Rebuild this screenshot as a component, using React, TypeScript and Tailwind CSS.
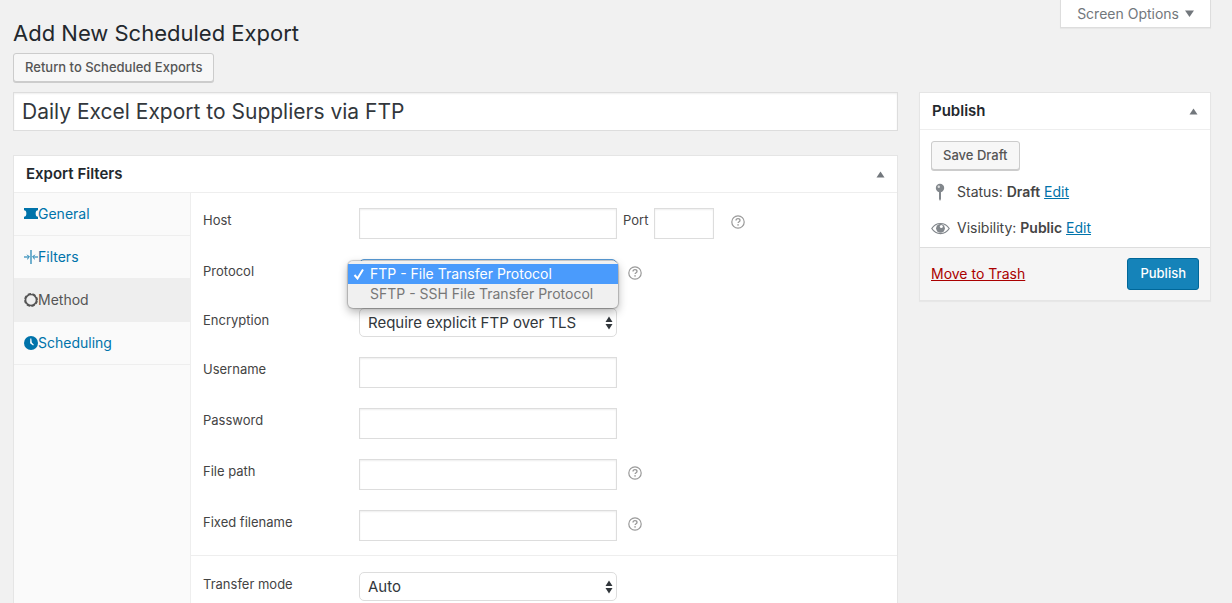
import type { ReactNode } from "react";

type IconProps = { className?: string };

const TicketIcon = ({ className }: IconProps) => (
  <svg className={className} viewBox="0 0 14 14" fill="currentColor" aria-hidden="true">
    <path d="M0 1h14v2.300a2.200 3 0 0 0 0 6.400V12H0V9.700a2.200 3 0 0 0 0-6.400z" />
  </svg>
);

const FiltersIcon = ({ className }: IconProps) => (
  <svg className={className} viewBox="0 0 14 14" fill="none" stroke="currentColor" aria-hidden="true">
    <path d="M7 0v14" strokeWidth="1.1" />
    <path d="M0 7h4.500M14 7H9.500" strokeWidth="1.1" />
    <path d="M3.200 4.800 5.400 7 3.200 9.200M10.800 4.800 8.600 7l2.200 2.200" strokeWidth="1" />
  </svg>
);

const MethodIcon = ({ className }: IconProps) => (
  <svg className={className} viewBox="0 0 14 14" fill="none" stroke="currentColor" aria-hidden="true">
    <circle cx="7" cy="7" r="5.500" strokeWidth="1.600" />
    <circle cx="7" cy="7" r="6.200" strokeWidth="1.400" strokeDasharray="3.400 1.470" strokeDashoffset="-.73" />
  </svg>
);

const ClockIcon = ({ className }: IconProps) => (
  <svg className={className} viewBox="0 0 14 14" aria-hidden="true">
    <circle cx="7" cy="7" r="7" fill="currentColor" />
    <path d="M6.300 2.600h1l.5 3.800 2.100 2.300-.8.8-3-2.200z" fill="#fff" />
  </svg>
);

const HelpIcon = () => (
  <svg className="size-[14px]" viewBox="0 0 14 14" fill="none" stroke="#9a9a9a" aria-hidden="true">
    <circle cx="7" cy="7" r="6.200" strokeWidth="1.200" />
    <path d="M5 5.600c0-1.200.9-1.900 2-1.900s2 .7 2 1.700c0 1.300-1.900 1.300-1.900 2.600" strokeWidth="1.300" />
    <circle cx="7.050" cy="9.900" r=".8" fill="#9a9a9a" stroke="none" />
  </svg>
);

const PinIcon = () => (
  <svg className="w-5 h-5" viewBox="0 0 20 20" aria-hidden="true">
    <circle cx="9" cy="6" r="4.200" fill="#82878c" />
    <path d="M8 9.500h2v7.500l-1 2-1-2z" fill="#82878c" />
    <circle cx="7.800" cy="4.700" r="1.200" fill="#dcdedf" />
  </svg>
);

const EyeIcon = () => (
  <svg className="w-5 h-5" viewBox="0 0 20 20" aria-hidden="true">
    <path
      d="M.8 10.500C5 3.800 14 3.800 18.200 10.500 14 17.200 5 17.200.8 10.500z"
      fill="#fff"
      stroke="#82878c"
      strokeWidth="1.200"
    />
    <circle cx="9.500" cy="10.300" r="4.400" fill="#82878c" />
    <circle cx="10.300" cy="8.600" r="1.500" fill="#fff" />
  </svg>
);

const Triangle = ({ down = false }: { down?: boolean }) => (
  <svg className="w-[9px] h-[7px]" viewBox="0 0 9 7" fill="#72777c" aria-hidden="true">
    <path d={down ? "M0 .5h9l-4.500 6.500z" : "M.5 6.500h8l-4-6z"} />
  </svg>
);

const Help = ({ label }: { label: string }) => (
  <button type="button" aria-label={label} className="mt-[7px] shrink-0">
    <HelpIcon />
  </button>
);

const tabs = [
  { name: "General", Icon: TicketIcon },
  { name: "Filters", Icon: FiltersIcon },
  { name: "Method", Icon: MethodIcon },
  { name: "Scheduling", Icon: ClockIcon },
];

const fieldClass =
  "h-[31px] border border-[#ddd] bg-white px-2 text-sm shadow-[inset_0_1px_2px_rgba(0,0,0,0.07)] outline-none";

type RowProps = { id: string; label: string; children: ReactNode };

const Row = ({ id, label, children }: RowProps) => (
  <div className="flex items-start">
    <label htmlFor={id} className="w-[156px] shrink-0 text-[13px] leading-6">
      {label}
    </label>
    {children}
  </div>
);

const TextRow = ({ id, label, help, type = "text" }: { id: string; label: string; help?: boolean; type?: string }) => (
  <Row id={id} label={label}>
    <input id={id} type={type} className={`${fieldClass} w-[258px] mr-[11px]`} />
    {help && <Help label={`${label} help`} />}
  </Row>
);

type SelectProps = { id: string; options: string[]; open?: boolean };

const Select = ({ id, options, open }: SelectProps) => (
  <div className="relative w-[258px] mr-[11px]">
    <select
      id={id}
      className={`block appearance-none w-full h-[29px] rounded-[5px] border bg-white pt-px pl-2 pr-6 text-[15px] text-[#32373c] outline-none ${
        open ? "border-[#5b9dd9]" : "border-[#ddd]"
      }`}
    >
      {options.map((option) => (
        <option key={option}>{option}</option>
      ))}
    </select>
    <svg
      className="absolute right-1 top-2 w-2 h-[14px] pointer-events-none"
      viewBox="0 0 8 14"
      fill="#32373c"
      aria-hidden="true"
    >
      <path d="M.5 6 4 .5 7.500 6zM.5 8h7L4 13.500z" />
    </svg>
    {open && (
      <ul
        role="listbox"
        aria-label="Protocol options"
        className="absolute z-10 -left-[11px] top-[2px] w-[270px] h-[47px] pt-[3px] rounded-[5px] bg-[#f0f0f0] text-sm leading-5 text-[#777] shadow-[0_0_1px_1px_rgba(0,0,0,0.2),0_4px_10px_rgba(0,0,0,0.3)]"
      >
        {options.map((option, i) => (
          <li
            key={option}
            role="option"
            aria-selected={i === 0}
            className={`flex items-center h-5 whitespace-nowrap ${i === 0 ? "bg-[#4a9bfc] text-white" : ""}`}
          >
            <span className="w-[22px] shrink-0 flex justify-center">
              {i === 0 && (
                <svg className="size-3" viewBox="0 0 12 12" fill="none" stroke="#fff" strokeWidth="2" aria-hidden="true">
                  <path d="M1.500 7 4.500 10.500 10 1.500" />
                </svg>
              )}
            </span>
            {option}
          </li>
        ))}
      </ul>
    )}
  </div>
);

const PanelHeader = ({ title }: { title: string }) => (
  <div className="flex items-center justify-between h-[37px] border-b border-[#eee] px-3">
    <h2 className="text-[15px] font-semibold text-[#23282d]">{title}</h2>
    <button type="button" aria-label={`Toggle ${title}`}>
      <Triangle />
    </button>
  </div>
);

const buttonClass =
  "rounded-[3px] border border-[#ccc] bg-[#f7f7f7] px-[11px] text-[13px] font-medium text-[#555] shadow-[0_1px_0_#ccc]";
const linkClass = "text-[#0073aa] underline";

const PublishBox = () => (
  <aside className="w-[292px] shrink-0 border border-[#e5e5e5] bg-white shadow-[0_1px_1px_rgba(0,0,0,0.04)]">
    <PanelHeader title="Publish" />
    <div className="px-[11px] pt-[11px] pb-[9px] text-sm">
      <button type="button" className={`${buttonClass} block h-[29px]`}>
        Save Draft
      </button>
      <p className="mt-3 flex items-center gap-[6px] leading-5">
        <PinIcon />
        <span>
          Status: <b className="font-semibold">Draft</b>{" "}
          <a href="#status" className={linkClass}>
            Edit
          </a>
        </span>
      </p>
      <p className="mt-4 flex items-center gap-[6px] leading-5">
        <EyeIcon />
        <span>
          Visibility: <b className="font-semibold">Public</b>{" "}
          <a href="#visibility" className={linkClass}>
            Edit
          </a>
        </span>
      </p>
    </div>
    <div className="flex items-center justify-between border-t border-[#ddd] bg-[#f5f5f5] px-[11px] py-[10px]">
      <a href="#trash" className="text-sm text-[#a00] underline">
        Move to Trash
      </a>
      <button
        type="button"
        className="h-8 rounded-[3px] border border-[#006799] bg-[#1583b9] px-3 text-[13px] font-medium text-white"
      >
        Publish
      </button>
    </div>
  </aside>
);

const App = () => (
  <div className="min-h-screen flex flex-col bg-[#f1f1f1] pl-[13px] pr-[21px] font-[Inter,'Liberation_Sans',sans-serif] text-[#444]">
    <header className="flex items-start justify-between">
      <div>
        <h1 className="mt-[17px] text-[22px] leading-8 text-[#23282d]">Add New Scheduled Export</h1>
        <button type="button" className={`${buttonClass} mt-1 block h-[29px]`}>
          Return to Scheduled Exports
        </button>
      </div>
      <button
        type="button"
        className="flex items-center gap-[6px] h-7 border border-t-0 border-[#ddd] bg-white px-4 text-sm text-[#72777c] shadow-[0_1px_1px_rgba(0,0,0,0.04)]"
      >
        Screen Options
        <Triangle down />
      </button>
    </header>

    <div className="mt-[10px] flex flex-1 items-start gap-[21px]">
      <main className="flex flex-1 min-w-0 flex-col self-stretch">
        <input
          aria-label="Export title"
          defaultValue="Daily Excel Export to Suppliers via FTP"
          className="h-[39px] w-full border border-[#ddd] bg-white px-2 text-[21px] text-[#32373c] shadow-[inset_0_1px_2px_rgba(0,0,0,0.07)] outline-none"
        />
        <section className="mt-6 flex flex-1 flex-col border border-b-0 border-[#e5e5e5] bg-white">
          <PanelHeader title="Export Filters" />
          <div className="flex flex-1">
            <nav className="w-[177px] shrink-0 border-r border-[#eee] bg-[#fafafa]">
              {tabs.map(({ name, Icon }) => (
                <a
                  key={name}
                  href={`#${name.toLowerCase()}`}
                  className={`flex items-center h-[43px] border-b border-[#eee] px-[10px] text-sm ${
                    name === "Method" ? "bg-[#eee] text-[#555]" : "text-[#0073aa]"
                  }`}
                >
                  <Icon className="size-[14px]" />
                  {name}
                </a>
              ))}
            </nav>
            <form className="flex-1 min-w-0">
              <div className="flex flex-col gap-5 px-3 pt-[15px] pb-[14px]">
                <Row id="host" label="Host">
                  <input id="host" type="text" className={`${fieldClass} w-[258px]`} />
                  <label htmlFor="port" className="mx-[6px] text-[13px] leading-6">
                    Port
                  </label>
                  <input id="port" type="text" className={`${fieldClass} w-[60px] mr-[17px]`} />
                  <Help label="Host help" />
                </Row>
                <Row id="protocol" label="Protocol">
                  <Select
                    id="protocol"
                    open
                    options={["FTP - File Transfer Protocol", "SFTP - SSH File Transfer Protocol"]}
                  />
                  <Help label="Protocol help" />
                </Row>
                <Row id="encryption" label="Encryption">
                  <Select id="encryption" options={["Require explicit FTP over TLS"]} />
                </Row>
                <TextRow id="username" label="Username" />
                <TextRow id="password" label="Password" type="password" />
                <TextRow id="path" label="File path" help />
                <TextRow id="filename" label="Fixed filename" help />
              </div>
              <div className="border-t border-[#eee] px-3 pt-4">
                <Row id="mode" label="Transfer mode">
                  <Select id="mode" options={["Auto"]} />
                </Row>
              </div>
            </form>
          </div>
        </section>
      </main>
      <PublishBox />
    </div>
  </div>
);

export default App;
